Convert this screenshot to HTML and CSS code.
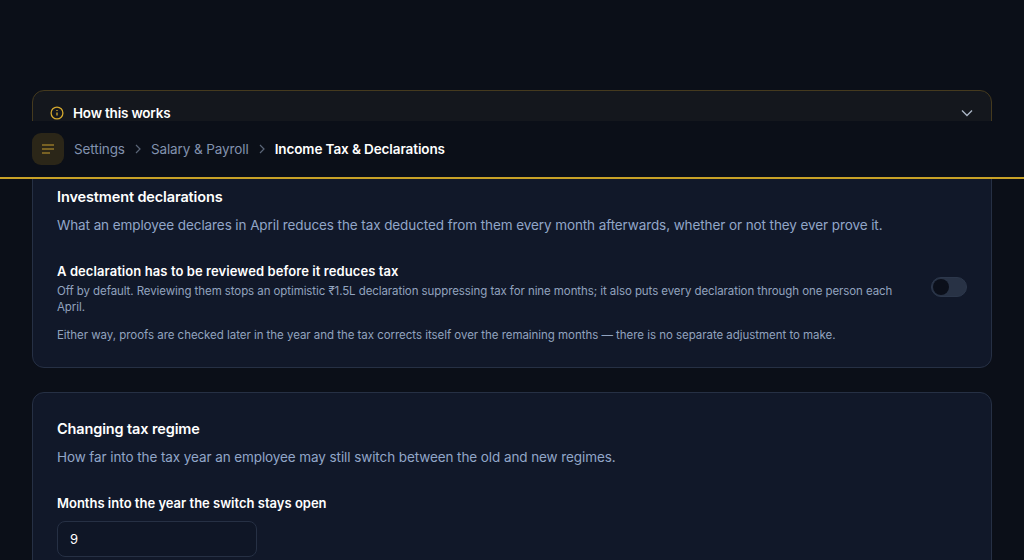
FILE: index.html
```html
<!DOCTYPE html>
<html lang="en">
<head>
    <meta charset="UTF-8">
    <meta name="viewport" content="width=device-width, initial-scale=1.0">
    <title>Income Tax &amp; Declarations</title>
    <link rel="stylesheet" href="styles.css">
</head>
<body>

    <header class="topbar">
        <button class="menu-btn" aria-label="Menu">
            <svg width="12" height="10" viewBox="0 0 12 10" fill="none" stroke="#937527" stroke-width="1.6">
                <path d="M0 1h12M0 5h12M0 9h8"/>
            </svg>
        </button>
        <nav class="crumbs">
            <span>Settings</span>
            <svg class="sep" width="16" height="16" viewBox="0 0 16 16" fill="none" stroke="#5b6678" stroke-width="1.2"><path d="M6 4l4 4-4 4"/></svg>
            <span>Salary &amp; Payroll</span>
            <svg class="sep" width="16" height="16" viewBox="0 0 16 16" fill="none" stroke="#5b6678" stroke-width="1.2"><path d="M6 4l4 4-4 4"/></svg>
            <strong>Income Tax &amp; Declarations</strong>
        </nav>
    </header>

    <main class="content">
        <section class="how">
            <svg width="16" height="16" viewBox="0 0 16 16" fill="none" stroke="#d4a82e" stroke-width="1.3">
                <circle cx="8" cy="8" r="5.9"/>
                <path d="M8 7.4v3M8 5.1v.9"/>
            </svg>
            <span class="how-title">How this works</span>
            <svg class="chev" width="16" height="16" viewBox="0 0 16 16" fill="none" stroke="#a9b4c4" stroke-width="1.4"><path d="M3 5.5l5 5 5-5"/></svg>
        </section>

        <section class="card">
            <h2>Investment declarations</h2>
            <p class="lead">What an employee declares in April reduces the tax deducted from them every month afterwards, whether or not they ever prove it.</p>
            <div class="setting">
                <div class="setting-text">
                    <h3>A declaration has to be reviewed before it reduces tax</h3>
                    <p class="hint">Off by default. Reviewing them stops an optimistic ₹1.5L declaration suppressing tax for nine months; it also puts every declaration through one person each April.</p>
                </div>
                <span class="toggle"><span class="knob"></span></span>
            </div>
            <p class="hint note">Either way, proofs are checked later in the year and the tax corrects itself over the remaining months — there is no separate adjustment to make.</p>
        </section>

        <section class="card">
            <h2>Changing tax regime</h2>
            <p class="lead">How far into the tax year an employee may still switch between the old and new regimes.</p>
            <label class="field-label" for="months">Months into the year the switch stays open</label>
            <input class="field" id="months" type="text" value="9">
        </section>
    </main>

</body>
</html>
```

FILE: styles.css
```css
* {
    box-sizing: border-box;
}
html, body {
    height: 100%;
}
body {
    margin: 0;
    background: #0b0f18;
    color: #fff;
    font-family: 'Inter', sans-serif;
    overflow: hidden;
    position: relative;
}
.topbar {
    position: absolute;
    top: 121px;
    left: 0;
    right: 0;
    height: 58px;
    z-index: 2;
    display: flex;
    align-items: center;
    gap: 10px;
    padding: 0 32px;
    background: #0b0f18;
    border-bottom: 2px solid #c9a227;
}
.menu-btn {
    width: 32px;
    height: 32px;
    padding: 0;
    border: none;
    border-radius: 9px;
    background: #2b2618;
    display: flex;
    align-items: center;
    justify-content: center;
}
.crumbs {
    display: flex;
    align-items: center;
    gap: 5px;
    font-size: 13.5px;
    letter-spacing: -0.1px;
    color: #8292ae;
}
.crumbs strong {
    color: #fff;
    font-weight: 600;
}
.content {
    padding: 90px 32px 0;
}
.how {
    height: 46px;
    display: flex;
    align-items: center;
    gap: 8px;
    padding: 0 16px;
    margin-bottom: 24px;
    background: #14171d;
    border: 1px solid #453a1e;
    border-radius: 12px;
}
.how-title {
    font-size: 13.5px;
    letter-spacing: -0.2px;
    font-weight: 600;
}
.chev {
    margin-left: auto;
}
.card {
    background: #111829;
    border: 1px solid #263044;
    border-radius: 12px;
    padding: 26px 24px 24px;
    margin-bottom: 24px;
}
.card h2 {
    margin: 0;
    font-size: 14.5px;
    letter-spacing: -0.13px;
    line-height: 20px;
    font-weight: 600;
}
.lead {
    margin: 8px 0 0;
    font-size: 13.5px;
    letter-spacing: -0.09px;
    line-height: 20px;
    color: #91a6c8;
}
.setting {
    display: flex;
    align-items: center;
    justify-content: space-between;
    gap: 32px;
    margin-top: 27px;
}
.setting h3 {
    margin: 0 0 3px;
    font-size: 13px;
    letter-spacing: 0.08px;
    line-height: 18px;
    font-weight: 600;
}
.hint {
    margin: 0;
    font-size: 11.5px;
    letter-spacing: -0.04px;
    line-height: 16px;
    color: #91a3bf;
}
.setting .hint {
    letter-spacing: -0.08px;
}
.note {
    margin-top: 12px;
}
.toggle {
    flex: none;
    width: 36px;
    height: 20px;
    margin-bottom: 4px;
    padding: 0 1px;
    display: flex;
    align-items: center;
    border: 1px solid #2c374b;
    border-radius: 10px;
    background: #283245;
}
.knob {
    display: block;
    width: 16px;
    height: 16px;
    border-radius: 50%;
    background: #0b0f1a;
}
.field-label {
    display: block;
    margin-top: 27px;
    font-size: 13px;
    line-height: 18px;
    font-weight: 600;
}
.field {
    display: block;
    width: 200px;
    height: 36px;
    margin-top: 9px;
    padding: 0 12px;
    background: #0f1626;
    border: 1px solid #263044;
    border-radius: 8px;
    color: #fff;
    font: inherit;
    font-size: 13px;
}
```
